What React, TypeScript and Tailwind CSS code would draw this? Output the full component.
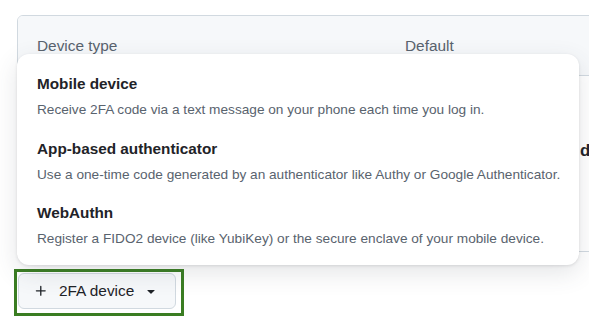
import React from "react";

const items = [
  { title: "Mobile device", desc: "Receive 2FA code via a text message on your phone each time you log in." },
  { title: "App-based authenticator", desc: "Use a one-time code generated by an authenticator like Authy or Google Authenticator." },
  { title: "WebAuthn", desc: "Register a FIDO2 device (like YubiKey) or the secure enclave of your mobile device." },
];

export default function App() {
  return (
    <div className="w-[604px] h-[320px] bg-white overflow-hidden" style={{ fontFamily: '"Liberation Sans", Arial, sans-serif' }}>
      <div className="relative w-[589px] h-[320px] overflow-hidden pl-[17px] pt-[15px]">
        <div className="w-[700px] border border-[#d1d9e0] rounded-[6px] overflow-hidden">
          <div className="h-[60px] bg-[#f6f8fa] border-b border-[#d1d9e0] flex items-center text-[15.4px] text-[#59636e] pt-[1px]">
            <div className="w-[387px] pl-[19px]">Device type</div>
            <div>Default</div>
          </div>
          <div className="h-[175px] flex items-center">
            <div className="w-[562px]" />
            <div className="text-[17px] font-bold text-[#1f2328] -mt-[26px]">de</div>
          </div>
        </div>
        <div className="mt-[17px] inline-flex border-[3px] border-[#3a7d22] -ml-[3px] pl-px pr-[5px] pt-px pb-[4px]">
          <button className="flex items-center h-[36px] w-[158px] bg-[#f6f8fa] border border-[#d1d9e0] rounded-[6px] pl-[15px] text-[15.4px] text-[#1f2328]">
            <svg width="14" height="14" viewBox="0 0 16 16" className="mr-[11px]" fill="#1f2328">
              <path d="M7.75 2a.75.75 0 0 1 .75.75V7h4.25a.75.75 0 0 1 0 1.5H8.5v4.25a.75.75 0 0 1-1.5 0V8.5H2.75a.75.75 0 0 1 0-1.5H7V2.75A.75.75 0 0 1 7.75 2Z" />
            </svg>
            <span>2FA device</span>
            <svg width="16" height="16" viewBox="0 0 16 16" className="ml-[9px]" fill="#1f2328">
              <path d="m4.427 7.427 3.396 3.396a.25.25 0 0 0 .354 0l3.396-3.396A.25.25 0 0 0 11.396 7H4.604a.25.25 0 0 0-.177.427Z" />
            </svg>
          </button>
        </div>
        <div className="absolute left-[17px] top-[54px] w-[562px] h-[211px] bg-white rounded-[12px] shadow-[0_1px_3px_rgba(31,35,40,0.12),0_8px_24px_rgba(66,74,83,0.14)] px-[20px] pt-[19px]">
          {items.map((it) => (
            <div key={it.title} className="h-[64.5px]">
              <div className="text-[15.3px] font-bold text-[#1f2328] leading-[21px]">{it.title}</div>
              <div className="text-[13.65px] text-[#59636e] leading-[18px] mt-[7px] whitespace-nowrap">{it.desc}</div>
            </div>
          ))}
        </div>
      </div>
    </div>
  );
}
